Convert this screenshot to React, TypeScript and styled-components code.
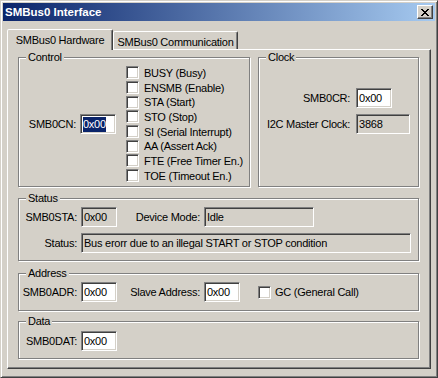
import React from 'react'
import styled, { createGlobalStyle } from 'styled-components'

const GlobalStyle = createGlobalStyle`
  html, body {
    margin: 0;
    padding: 0;
    background: #d4d0c8;
  }
  body {
    font-family: 'Liberation Sans', Arial, sans-serif;
    font-size: 11px;
    letter-spacing: -0.25px;
    color: #000;
  }
`

const Window = styled.div`
  width: 438px;
  height: 378px;
  box-sizing: border-box;
  padding: 2px;
  background: #d4d0c8;
  border: 1px solid;
  border-color: #d4d0c8 #404040 #404040 #d4d0c8;
  box-shadow: inset 1px 1px #fff, inset -1px -1px #808080;
  display: flex;
  flex-direction: column;
`

const TitleBar = styled.div`
  height: 18px;
  display: flex;
  align-items: center;
  justify-content: space-between;
  padding: 0 2px 0 2px;
  background: linear-gradient(to right, #0a246a, #a6caf0);
  color: #fff;
  font-weight: bold;
  font-size: 11.5px;
  letter-spacing: 0;
`

const CloseButton = styled.div`
  width: 16px;
  height: 14px;
  box-sizing: border-box;
  border: 1px solid;
  border-color: #fff #404040 #404040 #fff;
  box-shadow: inset -1px -1px #808080;
  background: #d4d0c8;
  display: flex;
  align-items: center;
  justify-content: center;
`

const Body = styled.div`
  padding: 8px 4px 0 4px;
`

const TabStrip = styled.div`
  display: flex;
  align-items: flex-end;
`

const Tab = styled.div<{ $active?: boolean; $w: number }>`
  position: relative;
  z-index: ${(p) => (p.$active ? 1 : 0)};
  width: ${(p) => p.$w}px;
  height: ${(p) => (p.$active ? 21 : 18)}px;
  margin-bottom: ${(p) => (p.$active ? -1 : 0)}px;
  padding-top: ${(p) => (p.$active ? 0 : 2)}px;
  box-sizing: border-box;
  border: 1px solid;
  border-bottom: none;
  border-color: #fff #404040 transparent #fff;
  border-radius: 2px 2px 0 0;
  box-shadow: inset -1px 0 #808080;
  background: #d4d0c8;
  display: flex;
  align-items: center;
  justify-content: center;
  white-space: nowrap;
`

const Panel = styled.div`
  width: 424px;
  height: 320px;
  box-sizing: border-box;
  border: 1px solid;
  border-color: #fff #404040 #404040 #fff;
  box-shadow: inset -1px -1px #808080;
  padding: 7px 11px 0 10px;
  display: flex;
  flex-direction: column;
`

const TopRow = styled.div`
  display: grid;
  grid-template-columns: 232px 161px;
  column-gap: 8px;
  height: 129px;
`

const Group = styled.div<{ $h?: number; $mt?: number }>`
  position: relative;
  box-sizing: border-box;
  height: ${(p) => (p.$h ? `${p.$h}px` : 'auto')};
  margin-top: ${(p) => p.$mt ?? 0}px;
  border: 1px solid #808080;
  box-shadow: inset 1px 1px #fff, 1px 1px #fff;
`

const Legend = styled.span`
  position: absolute;
  top: -7px;
  left: 7px;
  padding: 0 2px;
  line-height: 13px;
  background: #d4d0c8;
`

const ControlBody = styled.div`
  display: flex;
  align-items: center;
  height: 100%;
  box-sizing: border-box;
  padding: 7px 0 3px 0;
`

const ControlLeft = styled.div`
  width: 97px;
  display: flex;
  justify-content: flex-end;
  align-items: center;
  gap: 4px;
  margin-right: 10px;
`

const CheckList = styled.div`
  display: flex;
  flex-direction: column;
`

const CheckRow = styled.label`
  display: flex;
  align-items: center;
  gap: 5px;
  height: 15px;
  white-space: nowrap;
  &:nth-child(3n) {
    height: 14px;
  }
`

const CheckBox = styled.span<{ $ml?: number }>`
  width: 13px;
  height: 13px;
  flex: none;
  box-sizing: border-box;
  margin-left: ${(p) => p.$ml ?? 0}px;
  border: 1px solid;
  border-color: #808080 #fff #fff #808080;
  box-shadow: inset 1px 1px #404040, inset -1px -1px #d4d0c8;
  background: #fff;
`

const Field = styled.div<{ $w: number; $ro?: boolean }>`
  width: ${(p) => p.$w}px;
  height: 20px;
  flex: none;
  box-sizing: border-box;
  border: 1px solid;
  border-color: #808080 #fff #fff #808080;
  box-shadow: inset 1px 1px #404040, inset -1px -1px #d4d0c8;
  background: ${(p) => (p.$ro ? '#d4d0c8' : '#fff')};
  padding: 0 2px;
  display: flex;
  align-items: center;
  white-space: nowrap;
  overflow: hidden;
`

const Selected = styled.span`
  background: #0a246a;
  color: #fff;
  line-height: 15px;
`

const ClockGrid = styled.div`
  display: grid;
  grid-template-columns: auto auto;
  justify-content: center;
  align-items: center;
  column-gap: 6px;
  row-gap: 6px;
  padding-top: 30px;
`

const RightLabel = styled.span`
  justify-self: end;
  white-space: nowrap;
`

const Rows = styled.div<{ $pt: number }>`
  display: flex;
  flex-direction: column;
  gap: 6px;
  padding-top: ${(p) => p.$pt}px;
`

const Row = styled.div`
  display: flex;
  align-items: center;
  gap: 4px;
`

const Label = styled.span<{ $w: number }>`
  width: ${(p) => p.$w}px;
  flex: none;
  text-align: right;
  white-space: nowrap;
`

const CloseGlyph = () => {
  const pixels = [
    [0, 1, 6, 7],
    [1, 2, 5, 6],
    [2, 3, 4, 5],
    [3, 4],
    [2, 3, 4, 5],
    [1, 2, 5, 6],
    [0, 1, 6, 7],
  ]
  return (
    <svg width="8" height="7" viewBox="0 0 8 7" shapeRendering="crispEdges">
      {pixels.map((row, y) =>
        row.map((x) => <rect key={`${x}-${y}`} x={x} y={y} width="1" height="1" fill="#000" />),
      )}
    </svg>
  )
}

const flags = [
  'BUSY (Busy)',
  'ENSMB (Enable)',
  'STA (Start)',
  'STO (Stop)',
  'SI (Serial Interrupt)',
  'AA (Assert Ack)',
  'FTE (Free Timer En.)',
  'TOE (Timeout En.)',
]

const App = () => {
  return (
    <>
      <GlobalStyle />
      <Window>
        <TitleBar>
          <span>SMBus0 Interface</span>
          <CloseButton>
            <CloseGlyph />
          </CloseButton>
        </TitleBar>
        <Body>
          <TabStrip>
            <Tab $active $w={106}>SMBus0 Hardware</Tab>
            <Tab $w={125}>SMBus0 Communication</Tab>
          </TabStrip>
          <Panel>
            <TopRow>
              <Group>
                <Legend>Control</Legend>
                <ControlBody>
                  <ControlLeft>
                    <span>SMB0CN:</span>
                    <Field $w={36}>
                      <Selected>0x00</Selected>
                    </Field>
                  </ControlLeft>
                  <CheckList>
                    {flags.map((f) => (
                      <CheckRow key={f}>
                        <CheckBox />
                        <span>{f}</span>
                      </CheckRow>
                    ))}
                  </CheckList>
                </ControlBody>
              </Group>
              <Group>
                <Legend>Clock</Legend>
                <ClockGrid>
                  <RightLabel>SMB0CR:</RightLabel>
                  <Field $w={36}>0x00</Field>
                  <RightLabel>I2C Master Clock:</RightLabel>
                  <Field $w={54} $ro>
                    3868
                  </Field>
                </ClockGrid>
              </Group>
            </TopRow>

            <Group $h={63} $mt={12}>
              <Legend>Status</Legend>
              <Rows $pt={8}>
                <Row>
                  <Label $w={58}>SMB0STA:</Label>
                  <Field $w={36} $ro>
                    0x00
                  </Field>
                  <Label $w={79}>Device Mode:</Label>
                  <Field $w={110} $ro>
                    Idle
                  </Field>
                </Row>
                <Row>
                  <Label $w={58}>Status:</Label>
                  <Field $w={330} $ro>
                    Bus erorr due to an illegal START or STOP condition
                  </Field>
                </Row>
              </Rows>
            </Group>

            <Group $h={38} $mt={12}>
              <Legend>Address</Legend>
              <Rows $pt={8}>
                <Row>
                  <Label $w={58}>SMB0ADR:</Label>
                  <Field $w={36}>0x00</Field>
                  <Label $w={79}>Slave Address:</Label>
                  <Field $w={36}>0x00</Field>
                  <CheckBox $ml={14} />
                  <span>GC (General Call)</span>
                </Row>
              </Rows>
            </Group>

            <Group $h={38} $mt={10}>
              <Legend>Data</Legend>
              <Rows $pt={9}>
                <Row>
                  <Label $w={58}>SMB0DAT:</Label>
                  <Field $w={36}>0x00</Field>
                </Row>
              </Rows>
            </Group>
          </Panel>
        </Body>
      </Window>
    </>
  )
}

export default App
